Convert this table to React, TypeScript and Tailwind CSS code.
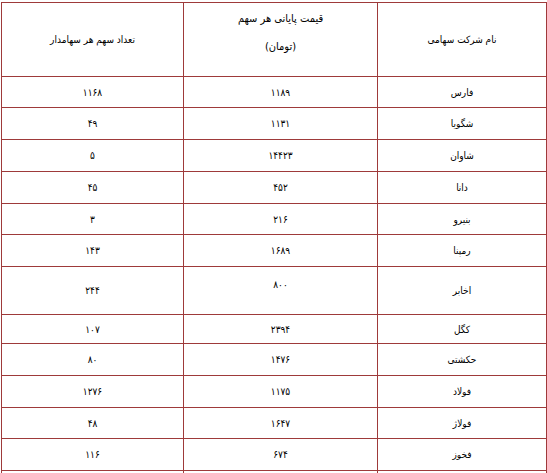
const rows = [
  { name: "فارس", price: "۱۱۸۹", count: "۱۱۶۸", h: "h-[31px]" },
  { name: "شگویا", price: "۱۱۳۱", count: "۴۹", h: "h-[32px]" },
  { name: "شاوان", price: "۱۴۴۲۳", count: "۵", h: "h-[32px]" },
  { name: "دانا", price: "۴۵۲", count: "۴۵", h: "h-[32px]" },
  { name: "بنیرو", price: "۲۱۶", count: "۳", h: "h-[31px]" },
  { name: "رمپنا", price: "۱۶۸۹", count: "۱۴۳", h: "h-[32px]" },
  { name: "اخابر", price: "۸۰۰", count: "۲۴۴", h: "h-[48px]", lift: true },
  { name: "کگل", price: "۲۳۹۴", count: "۱۰۷", h: "h-[29px]" },
  { name: "حکشتی", price: "۱۴۷۶", count: "۸۰", h: "h-[32px]" },
  { name: "فولاد", price: "۱۱۷۵", count: "۱۲۷۶", h: "h-[32px]" },
  { name: "فولاژ", price: "۱۶۴۷", count: "۴۸", h: "h-[31px]" },
  { name: "فخوز", price: "۶۷۴", count: "۱۱۶", h: "h-[32px]" },
];

const cell = "border border-[#9e3a3a] text-center align-middle p-0";

export default function App() {
  return (
    <div className="min-h-screen bg-white pt-[2px] pl-[1px] text-black font-['DejaVu_Sans_Condensed','DejaVu_Sans',Tahoma,sans-serif] text-[10px]">
      <table dir="rtl" className="w-[545px] border-collapse table-fixed">
        <colgroup>
          <col className="w-[169px]" />
          <col className="w-[194px]" />
          <col className="w-[182px]" />
        </colgroup>
        <thead>
          <tr className="h-[74px]">
            <th className={`${cell} font-normal`}>نام شرکت سهامی</th>
            <th className={`${cell} font-normal text-[11px]`}>
              <div className="pb-[13px]">
                <p>قیمت پایانی هر سهم</p>
                <p className="mt-[12px]">(تومان)</p>
              </div>
            </th>
            <th className={`${cell} font-normal`}>تعداد سهم هر سهامدار</th>
          </tr>
        </thead>
        <tbody>
          {rows.map((r) => (
            <tr key={r.name} className={r.h}>
              <td className={cell}>{r.name}</td>
              <td className={cell}>
                <span className={r.lift ? "block pb-[12px]" : ""}>{r.price}</span>
              </td>
              <td className={cell}>{r.count}</td>
            </tr>
          ))}
          <tr className="h-[32px]">
            <td className={cell}></td>
            <td className={cell}></td>
            <td className={cell}></td>
          </tr>
        </tbody>
      </table>
    </div>
  );
}
